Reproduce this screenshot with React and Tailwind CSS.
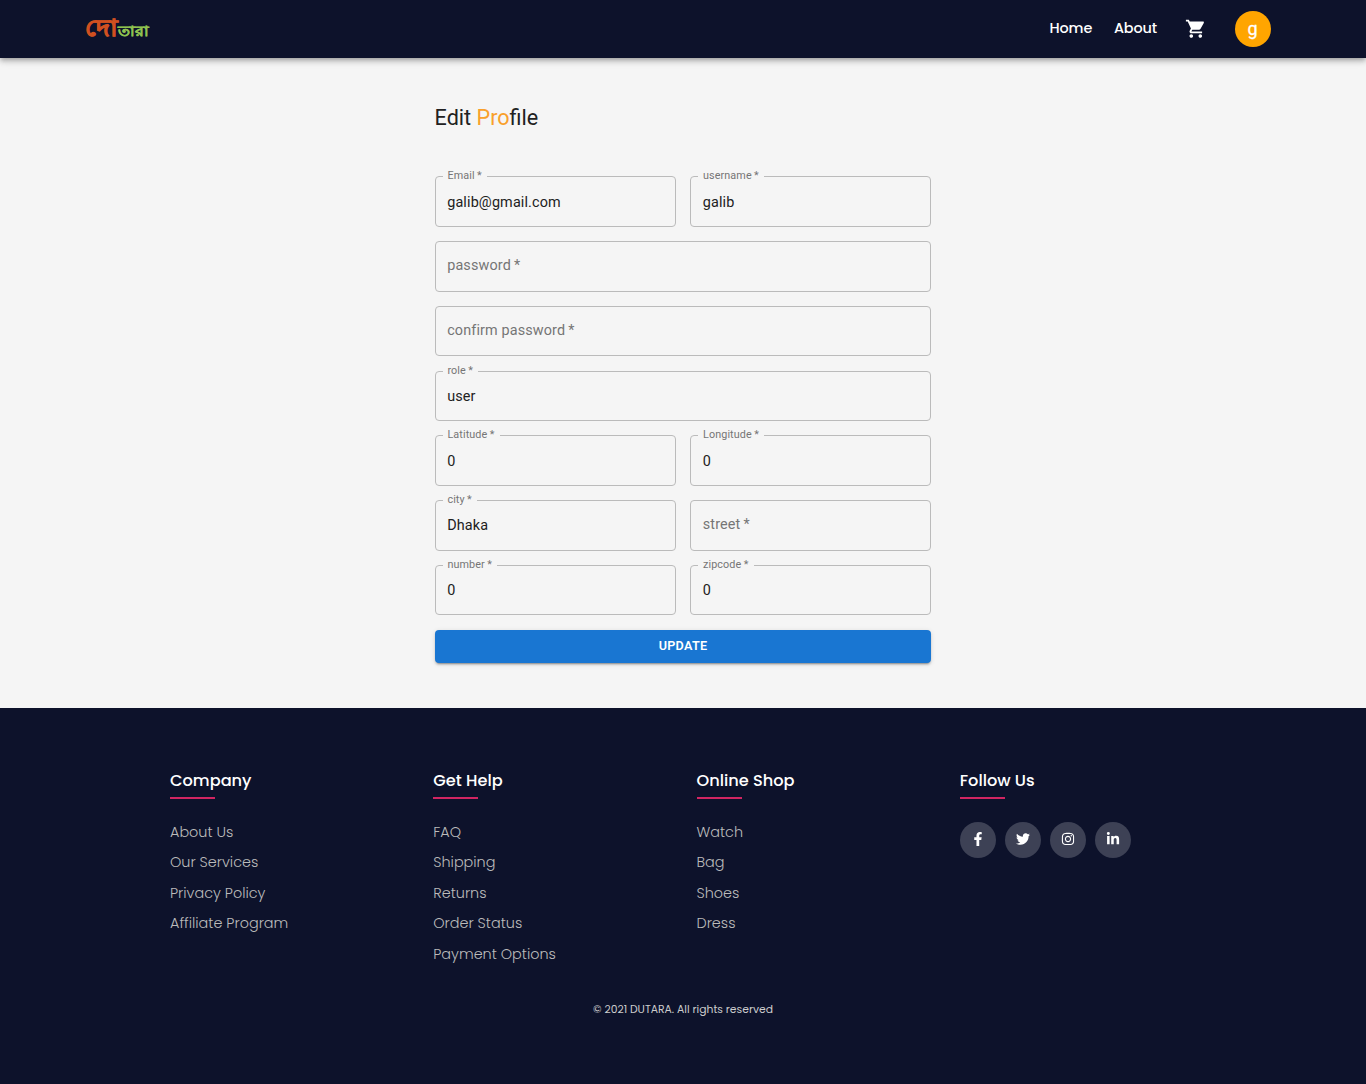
import React from "react";
import { MdShoppingCart } from "react-icons/md";
import { FaFacebookF, FaTwitter, FaInstagram, FaLinkedinIn } from "react-icons/fa";

function Field({ label, value, wide, notch }) {
  return (
    <div className={`relative h-[50.4px] ${wide ? "col-span-2" : ""}`}>
      {value ? (
        <>
          <fieldset className="absolute inset-x-0 bottom-0 -top-[4.7px] rounded-[4px] border border-[#bbbbbb] px-[7px] text-left">
            <legend className={`h-[10px] overflow-hidden ${notch}`} />
          </fieldset>
          <span className="absolute left-[12.8px] -top-[8.2px] text-[10.8px] leading-[16px] tracking-[0.1px] whitespace-nowrap text-[#757575]">{label}{"\u2009"}*</span>
          <div className="flex h-full items-center pl-[12.6px] pt-[1.5px] text-[14.4px] tracking-[0.135px] text-[#212121]">{value}</div>
        </>
      ) : (
        <div className="flex h-full items-center rounded-[4px] border border-[#bbbbbb] pl-[11.6px] pb-[1.6px] text-[14.4px] tracking-[0.135px] text-[#757575]">{label}{"\u2009"}*</div>
      )}
    </div>
  );
}

const columns = [
  { title: "Company", links: ["About Us", "Our Services", "Privacy Policy", "Affiliate Program"] },
  { title: "Get Help", links: ["FAQ", "Shipping", "Returns", "Order Status", "Payment Options"] },
  { title: "Online Shop", links: ["Watch", "Bag", "Shoes", "Dress"] },
  { title: "Follow Us", links: [] },
];
const socials = [FaFacebookF, FaTwitter, FaInstagram, FaLinkedinIn];

export default function App() {
  return (
    <div className="flex h-[1084px] flex-col bg-[#f5f5f5] font-['Roboto',sans-serif]">
      <header className="relative flex h-[58px] shrink-0 items-center justify-between bg-[#0d122b] pl-[85px] pr-[95px] shadow-[0_2px_4px_-1px_rgba(0,0,0,0.2),0_4px_5px_rgba(0,0,0,0.14),0_1px_10px_rgba(0,0,0,0.12)]">
        <div className="flex origin-left scale-y-[0.88] items-baseline pb-[3px] font-bold leading-none whitespace-nowrap">
          <span className="text-[26px] text-[#d05020] [-webkit-text-stroke:0.9px_#d05020]">দো</span>
          <span className="text-[16px] text-[#8fc250] [-webkit-text-stroke:0.4px_#8fc250]">তারা</span>
        </div>
        <nav className="flex items-center font-['Poppins','Inter',sans-serif] text-[14.4px] font-medium text-white">
          <span className="w-[64.5px] tracking-[-0.1px]">Home</span>
          <span className="w-[71.5px] tracking-[-0.1px]">About</span>
          <MdShoppingCart className="size-[21.6px]" />
          <span className="ml-[28px] flex size-[36px] items-center justify-center rounded-full bg-[#ffa500] pr-px pb-px font-['Roboto',sans-serif] text-[18px] font-normal [-webkit-text-stroke:0.3px_white]">g</span>
        </nav>
      </header>
      <main className="h-[650px] shrink-0 pl-[434.6px] pt-[43px]">
        <h1 className="h-[75.4px] text-[21.6px] leading-[34px] text-[#212121]">Edit <span className="text-[#f9a02b]">Pro</span>file</h1>
        <div className="grid w-[496.8px] grid-cols-2 gap-[14.4px]">
          <Field label="Email" value="galib@gmail.com" notch="w-[44px]" />
          <Field label="username" value="galib" notch="w-[66px]" />
          <Field label="password" wide />
          <Field label="confirm password" wide />
          <Field label="role" value="user" wide notch="w-[35px]" />
          <Field label="Latitude" value="0" notch="w-[57px]" />
          <Field label="Longitude" value="0" notch="w-[66px]" />
          <Field label="city" value="Dhaka" notch="w-[34px]" />
          <Field label="street" />
          <Field label="number" value="0" notch="w-[54px]" />
          <Field label="zipcode" value="0" notch="w-[56px]" />
          <button className="col-span-2 h-[33px] rounded-[4px] bg-[#1976d2] text-[12.6px] font-semibold tracking-[0.3px] text-white shadow-[0_3px_1px_-2px_rgba(0,0,0,0.2),0_2px_2px_rgba(0,0,0,0.14),0_1px_5px_rgba(0,0,0,0.12)]">UPDATE</button>
        </div>
      </main>
      <footer className="flex-1 bg-[#0d122b] pt-[59px] font-['Poppins','Inter',sans-serif]">
        <div className="ml-[170px] grid h-[231px] w-[1053px] grid-cols-4">
          {columns.map((c) => (
            <section key={c.title}>
              <h2 className="text-[16.2px] leading-[27px] font-medium text-white">{c.title}</h2>
              <div className="mt-[3px] h-[2px] w-[45px] bg-[#d12562]" />
              {c.links.length > 0 ? (
                <ul className="mt-[18px]">
                  {c.links.map((t) => (
                    <li key={t} className="h-[30.4px] text-[14.4px] leading-[30px] font-light text-[#bbbbbb]">{t}</li>
                  ))}
                </ul>
              ) : (
                <div className="mt-[23px] flex gap-[9px]">
                  {socials.map((Icon, i) => (
                    <span key={i} className="flex size-[36px] items-center justify-center rounded-full bg-[#3d4155] pr-[0.5px] pb-[2px] text-[14px] text-white"><Icon /></span>
                  ))}
                </div>
              )}
            </section>
          ))}
        </div>
        <p className="text-center text-[10.8px] leading-[24px] text-[#cccccc]">© 2021 DUTARA. All rights reserved</p>
      </footer>
    </div>
  );
}
